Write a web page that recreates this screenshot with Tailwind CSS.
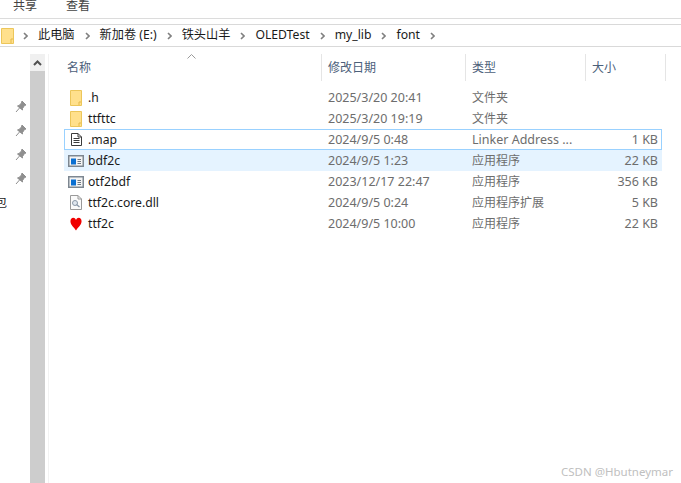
<!DOCTYPE html>
<html lang="zh">
<head>
<meta charset="UTF-8">
<title>font</title>
<script src="https://cdn.jsdelivr.net/npm/@tailwindcss/browser@4"></script>
</head>
<body class="bg-white">
<div class="w-[681px] h-[483px] overflow-hidden relative bg-white text-[12.5px] font-['Noto_Sans','Noto_Sans_CJK_SC',sans-serif] text-[#1a1a1a]">

  <!-- ribbon tabs -->
  <div class="h-[18px] flex items-start text-[12px] text-[#444] leading-[12px]">
    <span class="ml-[13px]">共享</span>
    <span class="ml-[29px]">查看</span>
  </div>
  <div class="h-[1px] bg-[#dcdcdc]"></div>
  <div class="h-[5px]"></div>

  <!-- address bar -->
  <div class="h-[23px] border-y border-[#d9d9d9] flex items-center text-[12.2px]">
    <svg class="ml-[1px]" width="13" height="16" viewBox="0 0 13 16">
      <path d="M0.5 0.5H12.5V15.5H0.5Z" fill="#ffe08c" stroke="#ecc65a"/>
      <path d="M10 15V11H12" fill="none" stroke="#e5b94a"/>
    </svg>
    <svg class="ml-[9px]" width="5" height="8" viewBox="0 0 5 8"><path d="M1 1L4 4L1 7" fill="none" stroke="#808080" stroke-width="1.6"/></svg>
    <span class="ml-[10px]">此电脑</span>
    <svg class="ml-[10px]" width="5" height="8" viewBox="0 0 5 8"><path d="M1 1L4 4L1 7" fill="none" stroke="#808080" stroke-width="1.6"/></svg>
    <span class="ml-[10px]">新加卷 (E:)</span>
    <svg class="ml-[10px]" width="5" height="8" viewBox="0 0 5 8"><path d="M1 1L4 4L1 7" fill="none" stroke="#808080" stroke-width="1.6"/></svg>
    <span class="ml-[10px]">铁头山羊</span>
    <svg class="ml-[10px]" width="5" height="8" viewBox="0 0 5 8"><path d="M1 1L4 4L1 7" fill="none" stroke="#808080" stroke-width="1.6"/></svg>
    <span class="ml-[10px]">OLEDTest</span>
    <svg class="ml-[10px]" width="5" height="8" viewBox="0 0 5 8"><path d="M1 1L4 4L1 7" fill="none" stroke="#808080" stroke-width="1.6"/></svg>
    <span class="ml-[10px]">my_lib</span>
    <svg class="ml-[10px]" width="5" height="8" viewBox="0 0 5 8"><path d="M1 1L4 4L1 7" fill="none" stroke="#808080" stroke-width="1.6"/></svg>
    <span class="ml-[10px]">font</span>
    <svg class="ml-[10px]" width="5" height="8" viewBox="0 0 5 8"><path d="M1 1L4 4L1 7" fill="none" stroke="#808080" stroke-width="1.6"/></svg>
  </div>

  <div class="flex h-[436px] pt-[7px]">
    <!-- quick access pins -->
    <div class="w-[30px] flex flex-col items-end pr-[3px] pt-[46px] gap-[10px] relative">
      <svg width="12" height="14" viewBox="0 0 12 14"><path d="M7 1L11 5L9.5 5.5L7.5 8.5L7.5 10L2.5 6L4 5.5L6.5 3Z M4.5 8L1 12" fill="#8f8f8f" stroke="#8f8f8f"/></svg>
      <svg width="12" height="14" viewBox="0 0 12 14"><path d="M7 1L11 5L9.5 5.5L7.5 8.5L7.5 10L2.5 6L4 5.5L6.5 3Z M4.5 8L1 12" fill="#8f8f8f" stroke="#8f8f8f"/></svg>
      <svg width="12" height="14" viewBox="0 0 12 14"><path d="M7 1L11 5L9.5 5.5L7.5 8.5L7.5 10L2.5 6L4 5.5L6.5 3Z M4.5 8L1 12" fill="#8f8f8f" stroke="#8f8f8f"/></svg>
      <svg width="12" height="14" viewBox="0 0 12 14"><path d="M7 1L11 5L9.5 5.5L7.5 8.5L7.5 10L2.5 6L4 5.5L6.5 3Z M4.5 8L1 12" fill="#8f8f8f" stroke="#8f8f8f"/></svg>
      <span class="absolute left-0 top-[142px] w-[7px] overflow-hidden text-[12px] leading-[14px] [direction:rtl]">包</span>
    </div>

    <!-- scrollbar -->
    <div class="w-[15px] flex flex-col">
      <div class="h-[17px] bg-[#f0f0f0] flex items-center justify-center">
        <svg width="9" height="6" viewBox="0 0 9 6"><path d="M1 5L4.5 1.5L8 5" fill="none" stroke="#505050" stroke-width="2"/></svg>
      </div>
      <div class="flex-1 bg-[#cdcdcd]"></div>
    </div>
    <div class="w-[3px]"></div>
    <div class="w-[1px] bg-[#f2f2f2]"></div>

    <!-- file list -->
    <div class="flex-1 relative">
      <svg class="absolute left-[138px] top-[0px]" width="9" height="5" viewBox="0 0 9 5"><path d="M0.5 4.5L4.5 0.5L8.5 4.5" fill="none" stroke="#9a9a9a"/></svg>

      <!-- column headers -->
      <div class="h-[27px] flex items-stretch text-[12px] text-[#4c607a] mb-[6px]">
        <div class="w-[273px] pl-[18px] pt-[1px] border-r border-[#e5e5e5] flex items-center">名称</div>
        <div class="w-[144px] pl-[6px] pt-[1px] border-r border-[#e5e5e5] flex items-center">修改日期</div>
        <div class="w-[120px] pl-[6px] pt-[1px] border-r border-[#e5e5e5] flex items-center">类型</div>
        <div class="w-[80px] pl-[6px] pt-[1px] border-r border-[#e5e5e5] flex items-center">大小</div>
      </div>

      <div class="ml-[15px] w-[598px] text-[#6d6d6d] [&>div>div+div]:pt-[2px]">
        <div class="h-[21px] flex items-center">
          <div class="w-[24px] pl-[6px]"><svg class="block" width="12" height="16" viewBox="0 0 12 16"><path d="M0.5 0.5H11.5V15.5H0.5Z" fill="#ffe08c" stroke="#ecc65a"/><path d="M9 15V12H11" fill="none" stroke="#e5b94a"/></svg></div>
          <div class="w-[240px] text-[12.2px] text-[#1a1a1a]">.h</div>
          <div class="w-[144px]">2025/3/20 20:41</div>
          <div class="w-[120px] text-[12px] -mt-[2px]">文件夹</div>
          <div class="w-[66px] text-right"></div>
        </div>
        <div class="h-[21px] flex items-center">
          <div class="w-[24px] pl-[6px]"><svg class="block" width="12" height="16" viewBox="0 0 12 16"><path d="M0.5 0.5H11.5V15.5H0.5Z" fill="#ffe08c" stroke="#ecc65a"/><path d="M9 15V12H11" fill="none" stroke="#e5b94a"/></svg></div>
          <div class="w-[240px] text-[12.2px] text-[#1a1a1a]">ttfttc</div>
          <div class="w-[144px]">2025/3/20 19:19</div>
          <div class="w-[120px] text-[12px] -mt-[2px]">文件夹</div>
          <div class="w-[66px] text-right"></div>
        </div>
        <div class="h-[21px] flex items-center border border-[#99d1ff]">
          <div class="w-[23px] pl-[6px]"><svg class="block" width="11" height="13" viewBox="0 0 11 13"><path d="M0.5 0.5H7L10.5 4V12.5H0.5Z" fill="#fff" stroke="#3a3a3a"/><path d="M7 0.5V4H10.5M2.5 5.5H8.5M2.5 7.5H8.5M2.5 9.5H8.5" fill="none" stroke="#3a3a3a"/></svg></div>
          <div class="w-[240px] text-[12.2px] text-[#1a1a1a]">.map</div>
          <div class="w-[144px]">2024/9/5 0:48</div>
          <div class="w-[120px]">Linker Address ...</div>
          <div class="w-[66px] text-right">1 KB</div>
        </div>
        <div class="h-[21px] flex items-center bg-[#e5f3ff]">
          <div class="w-[24px] pl-[4px]"><svg class="block" width="16" height="12" viewBox="0 0 16 12"><path d="M0.75 0.75H15.25V11.25H0.75Z" fill="#f4f4f4" stroke="#7d8791" stroke-width="1.5"/><path d="M3 3.5H8V9.5H3Z" fill="#0a6fd1"/><path d="M9.5 4.5H13M9.5 6.5H13M9.5 8.5H13" stroke="#6e7780"/></svg></div>
          <div class="w-[240px] text-[12.2px] text-[#1a1a1a]">bdf2c</div>
          <div class="w-[144px]">2024/9/5 1:23</div>
          <div class="w-[120px] text-[12px] -mt-[2px]">应用程序</div>
          <div class="w-[66px] text-right">22 KB</div>
        </div>
        <div class="h-[21px] flex items-center">
          <div class="w-[24px] pl-[4px]"><svg class="block" width="16" height="12" viewBox="0 0 16 12"><path d="M0.75 0.75H15.25V11.25H0.75Z" fill="#f4f4f4" stroke="#7d8791" stroke-width="1.5"/><path d="M3 3.5H8V9.5H3Z" fill="#0a6fd1"/><path d="M9.5 4.5H13M9.5 6.5H13M9.5 8.5H13" stroke="#6e7780"/></svg></div>
          <div class="w-[240px] text-[12.2px] text-[#1a1a1a]">otf2bdf</div>
          <div class="w-[144px]">2023/12/17 22:47</div>
          <div class="w-[120px] text-[12px] -mt-[2px]">应用程序</div>
          <div class="w-[66px] text-right">356 KB</div>
        </div>
        <div class="h-[21px] flex items-center">
          <div class="w-[24px] pl-[6px]"><svg class="block" width="12" height="15" viewBox="0 0 12 15"><path d="M0.5 0.5H8L11.5 4V14.5H0.5Z" fill="#fafafa" stroke="#9a9a9a"/><path d="M8 0.5V4H11.5" fill="none" stroke="#9a9a9a"/><circle cx="5" cy="8" r="2.5" fill="#dfe6ee" stroke="#8a98a8"/><path d="M6.5 9.5L9.5 12" stroke="#8a98a8" stroke-width="1.4"/></svg></div>
          <div class="w-[240px] text-[12.2px] text-[#1a1a1a]">ttf2c.core.dll</div>
          <div class="w-[144px]">2024/9/5 0:24</div>
          <div class="w-[120px] text-[12px] -mt-[2px]">应用程序扩展</div>
          <div class="w-[66px] text-right">5 KB</div>
        </div>
        <div class="h-[21px] flex items-center">
          <div class="w-[24px] pl-[6px]"><svg class="block" width="12" height="14" viewBox="0 0 14 14" preserveAspectRatio="none"><path d="M7 13.5C5 10.5 0.5 8 0.5 4.2C0.5 2 2 0.8 3.7 0.8C5.2 0.8 6.3 1.6 7 3C7.7 1.6 8.8 0.8 10.3 0.8C12 0.8 13.5 2 13.5 4.2C13.5 8 9 10.5 7 13.5Z" fill="#f00000"/></svg></div>
          <div class="w-[240px] text-[12.2px] text-[#1a1a1a]">ttf2c</div>
          <div class="w-[144px]">2024/9/5 10:00</div>
          <div class="w-[120px] text-[12px] -mt-[2px]">应用程序</div>
          <div class="w-[66px] text-right">22 KB</div>
        </div>
      </div>

      <!-- watermark -->
      <span class="absolute right-[8px] bottom-[3px] text-[11.5px] text-[#c0c0c0]">CSDN @Hbutneymar</span>
    </div>
  </div>
</div>
</body>
</html>
